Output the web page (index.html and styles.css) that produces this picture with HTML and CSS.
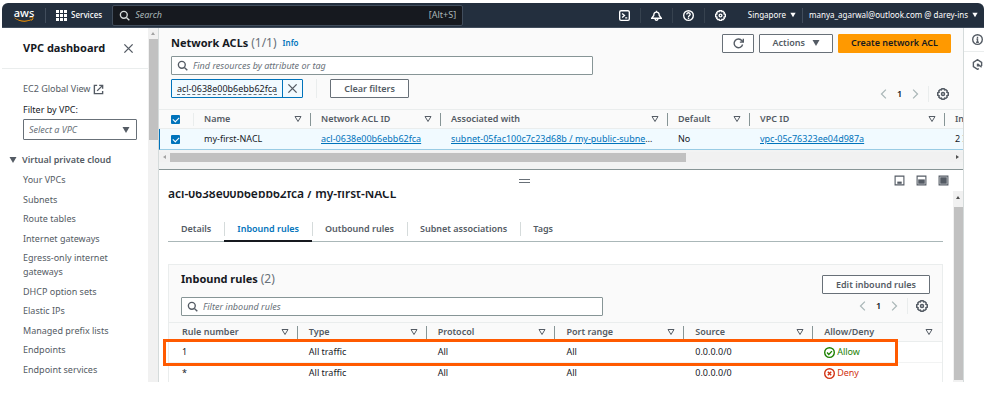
FILE: index.html
```html
<!DOCTYPE html>
<html lang="en">
<head>
<meta charset="utf-8">
<meta name="viewport" content="width=device-width, initial-scale=1">
<title>Network ACLs | VPC</title>
<link rel="stylesheet" href="styles.css">
</head>
<body>
<svg class="sprite" aria-hidden="true">
  <symbol id="i-search" viewBox="0 0 16 16"><circle cx="7" cy="7" r="5"/><path d="M10.8 10.8 15 15"/></symbol>
  <symbol id="i-close" viewBox="0 0 16 16"><path d="M2 2l12 12M14 2 2 14"/></symbol>
  <symbol id="i-gear" viewBox="0 0 16 16"><path d="M6.500 1h3l.6 1.500 1.500-.5 2 2-.5 1.500 1.900.8v3.400l-1.900.8.5 1.500-2 2-1.500-.5-.6 1.500h-3l-.6-1.500-1.500.5-2-2 .5-1.500L1 9.700V6.300l1.900-.8L2.400 4l2-2 1.500.5z"/><circle cx="8" cy="8" r="2"/></symbol>
  <symbol id="i-left" viewBox="0 0 16 16"><path d="M11 1 4 8l7 7"/></symbol>
  <symbol id="i-right" viewBox="0 0 16 16"><path d="M5 1l7 7-7 7"/></symbol>
  <symbol id="i-caret" viewBox="0 0 16 16"><path d="M1 2h14L8 14z" fill="currentColor"/></symbol>
  <symbol id="i-filter" viewBox="0 0 16 16"><path d="M2 3h12L8 13z"/></symbol>
</svg>

<div class="app">
  <header class="topbar">
    <a class="logo" href="#" aria-label="aws">
      <span class="logo-word">aws</span>
      <svg viewBox="0 0 40 10"><path d="M1 1c11 8 25 8 34 3l1 1C25 12 10 10 1 2z" fill="#f90"/><path d="M31 1c3-1 6-1 7 0 0 2-1 5-3 6" fill="none" stroke="#f90" stroke-width="2"/></svg>
    </a>
    <button class="top-item services" type="button">
      <svg class="grid-icon" viewBox="0 0 11 11" fill="currentColor"><path d="M0 0h3v3H0zM4 0h3v3H4zM8 0h3v3H8zM0 4h3v3H0zM4 4h3v3H4zM8 4h3v3H8zM0 8h3v3H0zM4 8h3v3H4zM8 8h3v3H8z"/></svg>
      Services
    </button>
    <label class="top-search">
      <svg class="icon"><use href="#i-search"/></svg>
      <input type="search" placeholder="Search" aria-label="Search">
      <span>[Alt+S]</span>
    </label>
    <div class="top-right">
      <button class="top-icon" type="button" aria-label="CloudShell"><svg class="icon top-svg" viewBox="0 0 16 16"><rect x="1" y="1" width="14" height="14" rx="2"/><path d="M4.500 5 8 8l-3.500 3M9 11.500h3"/></svg></button>
      <button class="top-icon" type="button" aria-label="Notifications"><svg class="icon top-svg" viewBox="0 0 16 16"><path d="M8 1v2M8 3c-3 0-4 2-4 5l-3 4h14l-3-4c0-3-1-5-4-5zM6 12c0 4 4 4 4 0"/></svg></button>
      <button class="top-icon" type="button" aria-label="Help"><svg class="icon top-svg" viewBox="0 0 16 16"><circle cx="8" cy="8" r="7"/><path d="M5.500 6.500c0-3.500 5-3 5 0C10.500 8 8 8 8 10M8 11v2"/></svg></button>
      <button class="top-icon plain" type="button" aria-label="Settings"><svg class="icon top-svg"><use href="#i-gear"/></svg></button>
      <button class="top-item region" type="button">Singapore <svg class="caret-s"><use href="#i-caret"/></svg></button>
      <button class="top-item account" type="button">manya_agarwal@outlook.com @ darey-ins <svg class="caret-s"><use href="#i-caret"/></svg></button>
    </div>
  </header>

  <div class="body">
    <aside class="sidebar">
      <div class="side-head">
        <h2>VPC dashboard</h2>
        <button class="bare" type="button" aria-label="Close"><svg class="icon"><use href="#i-close"/></svg></button>
      </div>
      <div class="side-filter">
        <a class="side-link" href="#">EC2 Global View <svg class="icon ext" viewBox="0 0 16 16"><path d="M6 2H2v12h12v-4M9 2h5v5M14 2 6 10"/></svg></a>
        <label for="vpc">Filter by VPC:</label>
        <div class="select-wrap">
          <select id="vpc"><option>Select a VPC</option></select>
          <svg class="caret"><use href="#i-caret"/></svg>
        </div>
      </div>
      <h3 class="side-group"><svg class="caret"><use href="#i-caret"/></svg>Virtual private cloud</h3>
      <ul class="side-nav">
        <li><a class="side-link" href="#">Your VPCs</a></li>
        <li><a class="side-link" href="#">Subnets</a></li>
        <li><a class="side-link" href="#">Route tables</a></li>
        <li><a class="side-link" href="#">Internet gateways</a></li>
        <li><a class="side-link" href="#">Egress-only internet gateways</a></li>
        <li><a class="side-link" href="#">DHCP option sets</a></li>
        <li><a class="side-link" href="#">Elastic IPs</a></li>
        <li><a class="side-link" href="#">Managed prefix lists</a></li>
        <li><a class="side-link" href="#">Endpoints</a></li>
        <li><a class="side-link" href="#">Endpoint services</a></li>
      </ul>
    </aside>
    <div class="vbar side-bar"><i class="arrow up light"></i><i class="thumb"></i></div>

    <main class="main">
      <section class="list">
        <div class="list-head">
          <div class="title-row">
            <h1>Network ACLs <span class="count">(1/1)</span></h1>
            <a class="info" href="#">Info</a>
            <div class="actions">
              <button class="btn refresh" type="button" aria-label="Refresh"><svg class="icon" viewBox="0 0 16 16"><path d="M14 9.500A6.300 6.300 0 1 1 13 4l2 2M15 1v5h-5"/></svg></button>
              <button class="btn menu" type="button">Actions <svg class="caret"><use href="#i-caret"/></svg></button>
              <button class="btn primary" type="button">Create network ACL</button>
            </div>
          </div>
          <label class="search">
            <svg class="icon"><use href="#i-search"/></svg>
            <input type="search" placeholder="Find resources by attribute or tag" aria-label="Find resources by attribute or tag">
          </label>
          <div class="token-row">
            <div class="token"><span>acl-0638e00b6ebb62fca</span><button class="bare" type="button" aria-label="Remove filter"><svg class="icon"><use href="#i-close"/></svg></button></div>
            <div class="clear"><button class="btn" type="button">Clear filters</button></div>
            <div class="pager">
              <button class="bare off" type="button" aria-label="Previous page"><svg class="icon"><use href="#i-left"/></svg></button>
              <b>1</b>
              <button class="bare off" type="button" aria-label="Next page"><svg class="icon"><use href="#i-right"/></svg></button>
              <button class="bare prefs" type="button" aria-label="Preferences"><svg class="icon gear"><use href="#i-gear"/></svg></button>
            </div>
          </div>
        </div>
        <div class="table-scroll">
          <table class="acl-table">
            <colgroup><col class="c-check"><col class="c-name"><col class="c-id"><col class="c-assoc"><col class="c-default"><col class="c-vpc"><col class="c-in"></colgroup>
            <thead>
              <tr>
                <th><div class="th"><input type="checkbox" checked aria-label="Select all"></div></th>
                <th><div class="th">Name<svg class="icon filter"><use href="#i-filter"/></svg></div></th>
                <th><div class="th">Network ACL ID<svg class="icon filter"><use href="#i-filter"/></svg></div></th>
                <th><div class="th">Associated with<svg class="icon filter"><use href="#i-filter"/></svg></div></th>
                <th><div class="th">Default<svg class="icon filter"><use href="#i-filter"/></svg></div></th>
                <th><div class="th">VPC ID<svg class="icon filter"><use href="#i-filter"/></svg></div></th>
                <th><div class="th">In</div></th>
              </tr>
            </thead>
            <tbody>
              <tr>
                <td><input type="checkbox" checked aria-label="Select my-first-NACL"></td>
                <td>my-first-NACL</td>
                <td><a href="#">acl-0638e00b6ebb62fca</a></td>
                <td><a href="#">subnet-05fac100c7c23d68b / my-public-subne</a>…</td>
                <td>No</td>
                <td><a href="#">vpc-05c76323ee04d987a</a></td>
                <td>2 I</td>
              </tr>
            </tbody>
          </table>
        </div>
        <div class="hbar"><i class="arrow left light"></i><i class="track"><i class="thumb"></i></i><i class="arrow right"></i></div>
      </section>

      <section class="split">
        <div class="split-head">
          <button class="bare handle" type="button" aria-label="Resize panel"></button>
          <div class="sizes">
            <button class="bare" type="button" aria-label="Small panel"><svg viewBox="0 0 10 10"><path d="M1 1h8v8H1z" class="frame"/><path d="M3 6h4v2H3z"/></svg></button>
            <button class="bare" type="button" aria-label="Half panel"><svg viewBox="0 0 10 10"><path d="M1 1h8v8H1z" class="frame"/><path d="M2 4h6v4H2z"/></svg></button>
            <button class="bare" type="button" aria-label="Full panel"><svg viewBox="0 0 10 10"><path d="M1 1h8v8H1z" class="frame"/><path d="M2 2h6v6H2z"/></svg></button>
          </div>
        </div>
        <div class="split-body">
          <div class="detail">
            <h2>acl-0638e00b6ebb62fca / my-first-NACL</h2>
            <nav class="tabs">
              <a href="#">Details</a>
              <a href="#" class="active">Inbound rules</a>
              <a href="#">Outbound rules</a>
              <a href="#">Subnet associations</a>
              <a href="#">Tags</a>
            </nav>
            <div class="card">
              <div class="card-head">
                <div class="card-left">
                  <h3>Inbound rules <span class="count">(2)</span></h3>
                  <label class="search">
                    <svg class="icon"><use href="#i-search"/></svg>
                    <input type="search" placeholder="Filter inbound rules" aria-label="Filter inbound rules">
                  </label>
                </div>
                <div class="card-right">
                  <button class="btn" type="button">Edit inbound rules</button>
                  <div class="pager">
                    <button class="bare off" type="button" aria-label="Previous page"><svg class="icon"><use href="#i-left"/></svg></button>
                    <b>1</b>
                    <button class="bare off" type="button" aria-label="Next page"><svg class="icon"><use href="#i-right"/></svg></button>
                    <button class="bare prefs" type="button" aria-label="Preferences"><svg class="icon gear"><use href="#i-gear"/></svg></button>
                  </div>
                </div>
              </div>
              <div class="rules-wrap">
                <table class="rules">
                  <thead>
                    <tr>
                      <th><div class="th">Rule number<svg class="icon filter"><use href="#i-filter"/></svg></div></th>
                      <th><div class="th">Type<svg class="icon filter"><use href="#i-filter"/></svg></div></th>
                      <th><div class="th">Protocol<svg class="icon filter"><use href="#i-filter"/></svg></div></th>
                      <th><div class="th">Port range<svg class="icon filter"><use href="#i-filter"/></svg></div></th>
                      <th><div class="th">Source<svg class="icon filter"><use href="#i-filter"/></svg></div></th>
                      <th><div class="th">Allow/Deny<svg class="icon filter"><use href="#i-filter"/></svg></div></th>
                    </tr>
                  </thead>
                  <tbody>
                    <tr><td>1</td><td>All traffic</td><td>All</td><td>All</td><td>0.0.0.0/0</td>
                      <td><span class="status allow"><svg class="icon" viewBox="0 0 16 16"><circle cx="8" cy="8" r="7"/><path d="M4.500 8l2.500 3 4.500-5"/></svg>Allow</span></td></tr>
                    <tr><td>*</td><td>All traffic</td><td>All</td><td>All</td><td>0.0.0.0/0</td>
                      <td><span class="status deny"><svg class="icon" viewBox="0 0 16 16"><circle cx="8" cy="8" r="7"/><path d="M5.500 5.500l5 5M10.500 5.500l-5 5"/></svg>Deny</span></td></tr>
                  </tbody>
                </table>
                <div class="highlight"></div>
              </div>
            </div>
          </div>
          <div class="vbar split-bar"><i class="arrow up"></i><i class="thumb"></i></div>
        </div>
      </section>
    </main>

    <aside class="tools">
      <button class="bare" type="button" aria-label="Info panel"><svg class="icon" viewBox="0 0 16 16"><circle cx="8" cy="8" r="7"/><path d="M8 4v2M6.500 7.500H8V12M6 12h4"/></svg></button>
      <button class="bare" type="button" aria-label="Diagnostics"><svg class="icon" viewBox="0 0 16 16"><path d="M14 10V5L8 1 2 5v6l6 4 2-1M8 7l6 5M8 7v3h3"/></svg></button>
    </aside>
  </div>
</div>
</body>
</html>
```
FILE: styles.css
```css
* { box-sizing: border-box; }

body {
  margin: 0;
  padding: 3px 0 21px 2px;
  background: #fff;
  color: #16191f;
  font: 9px/14px "Noto Sans", "Open Sans", sans-serif;
}

h1, h2, h3, ul { margin: 0; padding: 0; }
h1, h2, h3 { font-size: 11px; line-height: 18px; font-weight: 700; }
ul { list-style: none; }
a { color: #0073bb; }
button, input, select { font: inherit; color: inherit; margin: 0; }
button { cursor: pointer; }
input[type="search"] { appearance: none; border: 0; outline: 0; padding: 0; background: none; flex: 1; min-width: 0; }
input::placeholder { color: #687078; font-style: italic; opacity: 1; }

.sprite { position: absolute; width: 0; height: 0; }
.icon { width: 11px; height: 11px; flex: none; fill: none; stroke: currentColor; stroke-width: 2; }
.caret { width: 8px; height: 8px; flex: none; }
.caret-s { width: 6px; height: 6px; flex: none; }
.bare { display: flex; align-items: center; justify-content: center; padding: 0; border: 0; background: none; color: #545b64; }

.app { display: flex; flex-direction: column; height: calc(100vh - 24px); min-height: 379px; }

/* Top bar */
.topbar {
  display: flex;
  align-items: center;
  flex: none;
  height: 25px;
  padding-left: 12px;
  background: #232f3e;
  border-bottom: 1px solid #414d5c;
  border-radius: 6px 6px 0 0;
  color: #fff;
  font-size: 8px;
}
.logo { display: flex; flex-direction: column; align-items: center; width: 20px; color: #fff; text-decoration: none; }
.logo-word { font-size: 11px; line-height: 9px; font-weight: 500; }
.logo svg { width: 20px; height: 5px; }
.top-item { display: flex; align-items: center; gap: 4px; padding: 0; border: 0; background: none; color: #fff; white-space: nowrap; }
.services { height: 15px; margin-left: 11px; padding: 0 10px; border-left: 1px solid #414d5c; font-weight: 500; }
.grid-icon { width: 11px; height: 11px; }
.top-search { display: flex; align-items: center; gap: 5px; flex: 0 1 351px; height: 21px; padding: 0 6px; background: #16191f; border: 1px solid #414d5c; border-radius: 2px; color: #d5dbdb; font-size: 9px; }
.top-search input::placeholder { color: #aab7b8; }
.top-search span { color: #aab7b8; }
.top-right { display: flex; align-items: center; margin-left: auto; padding-right: 6px; }
.top-icon { display: flex; align-items: center; justify-content: center; width: 32px; height: 15px; padding: 0; border: 0; border-right: 1px solid #36424f; background: none; color: #fff; }
.top-icon.plain { border-color: transparent; }
.region { height: 15px; padding: 0 6px 0 11px; border-right: 1px solid #414d5c; }
.account { padding-left: 6px; }

/* Page body */
.body { display: flex; flex: 1; min-height: 0; }

.sidebar { display: flex; flex-direction: column; flex: none; width: 146px; color: #545b64; overflow: hidden; }
.side-head { display: flex; align-items: center; justify-content: space-between; height: 41px; padding: 0 14px 0 21px; border-bottom: 1px solid #eaeded; color: #16191f; }
.side-link { color: #545b64; text-decoration: none; }
.side-filter { display: flex; flex-direction: column; gap: 7px; padding: 13px 11px 0 21px; color: #16191f; }
.side-filter .side-link { display: flex; align-items: center; gap: 3px; }
.side-filter label { margin-bottom: -5px; }
.select-wrap { display: grid; align-items: center; }
.select-wrap > * { grid-area: 1 / 1; }
.select-wrap select { appearance: none; width: 100%; height: 21px; padding: 0 5px; border: 1px solid #687078; border-radius: 1px; background: #fff; color: #687078; font-style: italic; }
.select-wrap .caret { justify-self: end; margin-right: 7px; color: #545b64; pointer-events: none; }
.side-group { display: flex; align-items: center; gap: 5px; padding: 13px 0 0 7px; font-size: 9px; line-height: 14px; font-weight: 600; }
.side-nav { display: flex; flex: 1; flex-direction: column; justify-content: space-between; padding: 6px 38px 5px 21px; }

/* Scrollbars */
.vbar { display: flex; flex-direction: column; align-items: center; flex: none; width: 10px; background: #f1f1f1; }
.vbar .thumb { width: 9px; background: #c1c1c1; }
.side-bar .arrow { margin: 4px 0; }
.side-bar .thumb { height: 101px; }
.split-bar .arrow { margin: 5px 0 8px; }
.split-bar .thumb { flex: 1; margin-bottom: 2px; }
.arrow { flex: none; width: 0; height: 0; color: #505050; border: 2px solid transparent; }
.arrow.light { color: #a3a3a3; }
.arrow.up { border-bottom: 3px solid currentColor; border-top: 0; }
.arrow.left { border-right: 3px solid currentColor; border-left: 0; }
.arrow.right { border-left: 3px solid currentColor; border-right: 0; }
.hbar { display: flex; align-items: center; gap: 4px; height: 10px; margin: 2px 0 7px; padding: 0 4px; background: #f1f1f1; }
.hbar .track { flex: 1; height: 9px; }
.hbar .thumb { display: block; width: 66%; height: 9px; background: #c1c1c1; }

/* ACL list */
.main { display: flex; flex: 1; flex-direction: column; min-width: 0; border-left: 1px solid #d5dbdb; border-right: 1px solid #d5dbdb; }
.list { flex: none; background: #f2f3f3; }
.list-head { padding: 6px 12px 11px; background: #fafafa; }
.title-row { display: flex; align-items: center; height: 18px; }
.count { color: #687078; font-size: 12px; font-weight: 400; }
.info { margin-left: 6px; font-size: 8px; font-weight: 600; text-decoration: none; }
.actions { display: flex; gap: 5px; margin-left: auto; }
.btn { display: flex; align-items: center; justify-content: center; gap: 7px; height: 19px; padding: 0 13px; border: 1px solid #687078; border-radius: 1px; background: #fff; color: #545b64; font-weight: 600; white-space: nowrap; }
.btn.refresh { width: 32px; padding: 0; }
.btn.menu { padding: 0 12px; }
.btn.primary { padding: 0 12px; border-color: #f90; background: #f90; color: #16191f; }
.search { display: flex; align-items: center; gap: 5px; width: 422px; max-width: 100%; height: 19px; padding: 0 5px; border: 1px solid #879596; border-radius: 1px; background: #fff; color: #545b64; }
.list-head .search { margin: 4px 0; }
.token-row { display: flex; align-items: center; }
.token { display: flex; align-items: center; height: 19px; border: 1px solid #0073bb; border-radius: 1px; background: #f1faff; }
.token span { margin: 0 5px; line-height: 11px; border-bottom: 1px dashed #687078; }
.token .bare { width: 20px; height: 17px; border-left: 1px solid #0073bb; }
.clear { margin-left: 13px; padding-left: 13px; border-left: 1px solid #eaeded; }
.pager { display: flex; align-items: center; gap: 8px; height: 16px; }
.list-head .pager { align-self: flex-end; margin: 0 2px -4px auto; }
.pager .icon { width: 10px; height: 10px; }
.pager .gear { width: 12px; height: 12px; }
.pager b { width: 5px; font-weight: 600; }
.pager .off { color: #aab7b8; }
.pager .prefs { height: 16px; padding-left: 8px; border-left: 1px solid #eaeded; }

table { border-collapse: separate; border-spacing: 0; table-layout: fixed; }
th, td { padding: 0; text-align: left; white-space: nowrap; font-weight: 400; }
th { height: 20px; border-top: 1px solid #eaeded; border-bottom: 1px solid #eaeded; background: #fafafa; color: #545b64; }
.th { display: flex; align-items: center; justify-content: space-between; height: 13px; padding: 0 8px 0 10px; border-right: 1px solid #879596; font-weight: 600; }
.filter { width: 8px; height: 8px; }
.table-scroll { overflow: hidden; background: #fff; }
.acl-table { width: 840px; }
.acl-table td { height: 21px; padding-left: 10px; border-bottom: 1px solid #99cbe4; background: #f1faff; }
.acl-table td:first-child { border-left: 1px solid #0073bb; padding-left: 11px; }
.acl-table th:first-child .th { padding-left: 12px; border-color: #eaeded; }
.c-check { width: 35px; }
.c-name { width: 117px; }
.c-id { width: 130px; }
.c-assoc { width: 227px; }
.c-default { width: 82px; }
.c-vpc { width: 195px; }
input[type="checkbox"] { appearance: none; display: grid; place-items: center; width: 9px; height: 9px; border-radius: 1px; background: #0073bb; }
input[type="checkbox"]:checked::after { content: ""; width: 3px; height: 5px; margin-bottom: 1px; border: solid #fff; border-width: 0 1px 1px 0; transform: rotate(45deg); }

/* Split panel */
.split { display: flex; flex: 1; flex-direction: column; min-height: 0; border-top: 1px solid #879596; }
.split-head { display: grid; grid-template-columns: 6fr 11px 7fr; align-items: center; flex: none; height: 21px; padding: 0 14px 0 0; }
.handle { grid-column: 2; height: 4px; border-top: 1px solid #687078; border-bottom: 1px solid #687078; }
.sizes { display: flex; justify-content: flex-end; gap: 11px; }
.sizes svg { width: 11px; height: 11px; fill: #545b64; }
.sizes .frame { fill: none; stroke: #545b64; stroke-width: 1; }
.split-body { display: flex; flex: 1; min-height: 0; }
.detail { flex: 1; min-width: 0; padding: 0 10px 0 9px; overflow: hidden; }
.detail h2 { margin-top: -6px; font-size: 12px; font-weight: 600; }
.tabs { display: flex; height: 26px; margin-top: 13px; border-bottom: 1px solid #aab7b8; }
.tabs a { position: relative; height: 26px; padding: 6px 13px 0; color: #545b64; font-weight: 600; text-decoration: none; }
.tabs a + a::before { content: ""; position: absolute; left: 0; top: 6px; height: 14px; border-left: 1px solid #d5dbdb; }
.tabs .active { border-bottom: 2px solid #16191f; color: #0073bb; }
.card { margin-top: 22px; border: 1px solid #eaeded; }
.card-head { display: flex; justify-content: space-between; padding: 5px 12px 6px; background: #fafafa; }
.card-left { display: flex; flex-direction: column; gap: 9px; flex: 0 1 422px; }
.card-right { display: flex; flex-direction: column; align-items: flex-end; gap: 4px; padding-top: 5px; }
.card-right .pager { margin-right: 2px; }
.rules-wrap { position: relative; }
.rules { width: 100%; }
.rules .th { padding-left: 11px; }
.rules td { height: 21px; padding-left: 11px; border-bottom: 1px solid #f2f3f3; }
.rules td:first-child, .rules th:first-child .th { padding-left: 13px; }
.rules th:last-child .th { border-color: transparent; }
.status { display: flex; align-items: center; gap: 2px; }
.allow { color: #1d8102; }
.deny { color: #d13212; }
.highlight { position: absolute; top: 17px; left: -6px; right: 44px; height: 27px; border: 3px solid #ff5a00; pointer-events: none; }

/* Right tool strip */
.tools { flex: none; width: 20px; }
.tools .bare { width: 100%; height: 24px; padding-left: 6px; border-bottom: 1px solid #eaeded; }
.tools .bare + .bare { border: 0; }
```
